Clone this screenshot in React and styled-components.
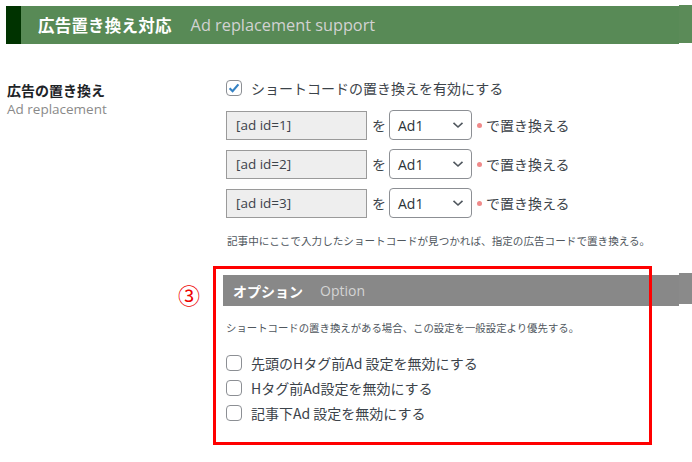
import styled, { createGlobalStyle } from 'styled-components';

const Global = createGlobalStyle`
    html, body {
        margin: 0;
        padding: 0;
        background: #ffffff;
        font-family: "Open Sans", "Noto Sans CJK JP", sans-serif;
        color: #2c3338;
    }
`

const rows = ['[ad id=1]', '[ad id=2]', '[ad id=3]'];
const options = [
    '先頭のHタグ前Ad 設定を無効にする',
    'Hタグ前Ad設定を無効にする',
    '記事下Ad 設定を無効にする',
];

function Check({ checked }) {
    return (
        <CheckBox>
            {checked && (
                <svg width="14" height="14" viewBox="0 0 14 14">
                    <path d="M2.6 7.2 L5.6 10.2 L11.4 3.4" fill="none" stroke="#3582c4" strokeWidth="2.2" />
                </svg>
            )}
        </CheckBox>
    )
}

export default function App() {
    return (
        <Page>
            <Global />
            <HeaderRow>
                <Header>
                    <h1>広告置き換え対応</h1>
                    <span>Ad replacement support</span>
                </Header>
                <HeaderEdge />
            </HeaderRow>

            <Section>
                <Label>
                    <h2>広告の置き換え</h2>
                    <p>Ad replacement</p>
                </Label>
                <Fields>
                    <CheckRow>
                        <Check checked />
                        <span>ショートコードの置き換えを有効にする</span>
                    </CheckRow>
                    <ReplaceList>
                        {rows.map((r) => (
                            <ReplaceRow key={r}>
                                <CodeInput>{r}</CodeInput>
                                <Particle>を</Particle>
                                <SelectBox>
                                    <span>Ad1</span>
                                    <svg width="12" height="8" viewBox="0 0 12 8">
                                        <path d="M1.5 1.8 L6 6 L10.5 1.8" fill="none" stroke="#50575e" strokeWidth="1.6" />
                                    </svg>
                                </SelectBox>
                                <Dot />
                                <Suffix>で置き換える</Suffix>
                            </ReplaceRow>
                        ))}
                    </ReplaceList>
                    <Note>記事中にここで入力したショートコードが見つかれば、指定の広告コードで置き換える。</Note>
                </Fields>
            </Section>

            <OptionSection>
                <Marker>③</Marker>
                <Highlight />
                <OptionBarRow>
                    <OptionBar>
                        <h3>オプション</h3>
                        <span>Option</span>
                    </OptionBar>
                    <OptionEdge />
                </OptionBarRow>
                <OptionNote>ショートコードの置き換えがある場合、この設定を一般設定より優先する。</OptionNote>
                <OptionList>
                    {options.map((o) => (
                        <OptionRow key={o}>
                            <Check />
                            <span>{o}</span>
                        </OptionRow>
                    ))}
                </OptionList>
            </OptionSection>
        </Page>
    )
}

const Page = styled.div`
    width: 692px;
    height: 462px;
    overflow: hidden;
    padding-top: 5px;
    box-sizing: border-box;
`

const HeaderRow = styled.div`
    display: flex;
    align-items: flex-start;
    padding-left: 6px;
`

const Header = styled.div`
    flex: 1;
    height: 38px;
    margin-top: 1px;
    display: flex;
    align-items: center;
    gap: 19px;
    background: #588a56;
    border-left: 15px solid #003300;
    padding-left: 17px;
    box-sizing: border-box;

    h1 {
        margin: 0;
        font-family: "Noto Sans CJK JP", sans-serif;
        font-size: 16.5px;
        font-weight: 700;
        color: #ffffff;
        letter-spacing: 0.2px;
    }
    span {
        font-size: 16.3px;
        color: #d2d2d2;
    }
`

const HeaderEdge = styled.div`
    width: 13px;
    height: 38px;
    background: #5b8b58;
`

const Section = styled.div`
    display: flex;
    margin-top: 35px;
`

const Label = styled.div`
    width: 219px;
    padding-left: 7px;
    padding-top: 1px;

    h2 {
        margin: 0;
        font-family: "Noto Sans CJK JP", sans-serif;
        font-size: 14px;
        font-weight: 700;
        color: #1d2327;
        line-height: 20px;
    }
    p {
        margin: 0;
        font-size: 13.5px;
        color: #8a8a8a;
        line-height: 18px;
    }
`

const Fields = styled.div`
    display: flex;
    flex-direction: column;
`

const CheckBox = styled.span`
    width: 16px;
    height: 16px;
    box-sizing: border-box;
    border: 1px solid #8c8f94;
    border-radius: 4px;
    background: #ffffff;
    display: flex;
    align-items: center;
    justify-content: center;
    flex-shrink: 0;
`

const CheckRow = styled.div`
    display: flex;
    align-items: center;
    gap: 9px;
    height: 18px;
    font-family: "Noto Sans CJK JP", sans-serif;
    font-size: 14px;
    color: #3c434a;
`

const ReplaceList = styled.div`
    display: flex;
    flex-direction: column;
    gap: 9px;
    margin-top: 13px;
`

const ReplaceRow = styled.div`
    display: flex;
    align-items: center;
    font-family: "Noto Sans CJK JP", sans-serif;
    font-size: 14px;
    color: #3c434a;
`

const CodeInput = styled.div`
    width: 141px;
    height: 29px;
    box-sizing: border-box;
    border: 1px solid #9a9a9a;
    background: #eeeeee;
    padding-left: 9px;
    display: flex;
    align-items: center;
    font-family: "Open Sans", sans-serif;
    font-size: 13.5px;
    color: #3c434a;
`

const Particle = styled.span`
    margin: 0 3px 0 5px;
`

const SelectBox = styled.div`
    width: 83px;
    height: 30px;
    box-sizing: border-box;
    border: 1px solid #8c8f94;
    border-radius: 4px;
    background: #ffffff;
    display: flex;
    align-items: center;
    justify-content: space-between;
    padding: 0 7px 0 8px;
    font-family: "Open Sans", sans-serif;
    font-size: 14px;
    color: #2c3338;
`

const Dot = styled.span`
    width: 5px;
    height: 5px;
    border-radius: 50%;
    background: #f08a8a;
    margin: 0 4px 0 5px;
`

const Suffix = styled.span`
    font-size: 14px;
`

const Note = styled.p`
    margin: 15px 0 0 1px;
    font-family: "Noto Sans CJK JP", sans-serif;
    font-size: 10.6px;
    color: #50575e;
`

const OptionSection = styled.div`
    position: relative;
    margin-left: 223px;
    margin-top: 27px;
`

const Marker = styled.span`
    position: absolute;
    left: -45px;
    top: 6px;
    font-family: "Noto Sans CJK JP", sans-serif;
    font-size: 22px;
    line-height: 26px;
    color: #ee0000;
`

const Highlight = styled.div`
    position: absolute;
    left: -10px;
    top: -9px;
    width: 439px;
    height: 179px;
    box-sizing: border-box;
    border: 3px solid #ff0000;
    z-index: 2;
    pointer-events: none;
`

const OptionBarRow = styled.div`
    display: flex;
    align-items: flex-start;
`

const OptionBar = styled.div`
    flex: 1;
    height: 31px;
    background: #888888;
    display: flex;
    align-items: center;
    gap: 17px;
    padding-left: 10px;

    h3 {
        margin: 0;
        font-family: "Noto Sans CJK JP", sans-serif;
        font-size: 14px;
        font-weight: 700;
        color: #ffffff;
    }
    span {
        font-size: 14px;
        color: #d4d4d4;
    }
`

const OptionEdge = styled.div`
    width: 13px;
    height: 31px;
    margin-top: -2px;
    background: #8a8a8a;
`

const OptionNote = styled.p`
    margin: 14px 0 0 3px;
    font-family: "Noto Sans CJK JP", sans-serif;
    font-size: 10.4px;
    color: #50575e;
`

const OptionList = styled.div`
    display: flex;
    flex-direction: column;
    gap: 9px;
    margin-top: 20px;
    margin-left: 3px;
`

const OptionRow = styled.div`
    display: flex;
    align-items: center;
    gap: 9px;
    height: 16px;
    font-family: "Noto Sans CJK JP", sans-serif;
    font-size: 14px;
    color: #3c434a;
`
